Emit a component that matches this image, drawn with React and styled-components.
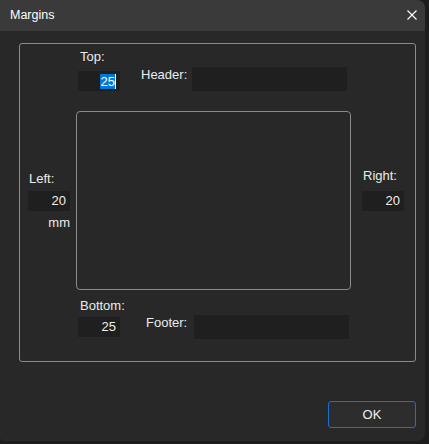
import React from "react";
import styled, { createGlobalStyle } from "styled-components";

const GlobalStyle = createGlobalStyle`
  html, body {
    margin: 0;
    padding: 0;
    background: #1d1d1d;
  }
  body {
    font-family: "Liberation Sans", Arial, sans-serif;
    font-size: 13px;
    color: #e8e8e8;
  }
`;

const Window = styled.div`
  width: 425px;
  height: 441px;
  background: #282828;
  border-radius: 0 8px 8px 4px;
  overflow: hidden;
  display: flex;
  flex-direction: column;
`;

const TitleBar = styled.div`
  height: 31px;
  flex: none;
  background: #3a3a3a;
  display: flex;
  align-items: center;
  justify-content: space-between;
  padding: 0 8px 0 10px;
  box-sizing: border-box;
`;

const Title = styled.span`
  font-size: 12.5px;
  color: #ffffff;
  line-height: 16px;
  margin-top: -1px;
`;

const CloseButton = styled.div`
  width: 10px;
  height: 10px;
  margin-top: -1px;
  display: flex;
`;

const Body = styled.div`
  flex: 1;
  display: flex;
  flex-direction: column;
  padding: 12px 9px 0 19px;
`;

const GroupBox = styled.div`
  width: 397px;
  height: 319px;
  box-sizing: border-box;
  border: 1px solid #8a8a8a;
  border-radius: 3px;
  display: grid;
  grid-template-columns: 8px 42px 6px 275px 11px 42px;
  grid-template-rows: 67px 179px 1fr;
`;

const Label = styled.div`
  line-height: 16px;
  white-space: nowrap;
  color: #ececec;
  width: ${(p) => (p.$width ? `${p.$width}px` : "auto")};
  margin-left: ${(p) => p.$indent || 0}px;
  text-align: ${(p) => p.$align || "left"};
`;

const Field = styled.div`
  width: ${(p) => p.$width}px;
  height: ${(p) => p.$height || 20}px;
  background: #1f1f1f;
  box-sizing: border-box;
  display: flex;
  align-items: center;
  justify-content: flex-end;
  padding-right: 4px;
  line-height: 16px;
  color: #f0f0f0;
  margin-left: ${(p) => p.$indent || 0}px;
`;

const Selected = styled.span`
  background: #0078d7;
  color: #ffffff;
  line-height: 15px;
  padding: 0 0 0 1px;
  border-right: 1px solid #ffffff;
`;

const SideColumn = styled.div`
  grid-column: ${(p) => p.$col};
  grid-row: 2;
  display: flex;
  flex-direction: column;
  padding-top: ${(p) => p.$top}px;
`;

const TopBlock = styled.div`
  grid-column: 4;
  grid-row: 1;
  display: flex;
  flex-direction: column;
  padding: 5px 0 0 2px;
`;

const BottomBlock = styled.div`
  grid-column: 4;
  grid-row: 3;
  display: flex;
  flex-direction: column;
  padding: 8px 0 0 2px;
`;

const FieldRow = styled.div`
  display: flex;
  align-items: ${(p) => p.$align || "center"};
  margin-top: ${(p) => p.$gap || 0}px;
`;

const RowLabel = styled(Label)`
  align-self: flex-start;
  margin-top: ${(p) => p.$drop || 0}px;
`;

const Page = styled.div`
  grid-column: 4;
  grid-row: 2;
  border: 1px solid #8a8a8a;
  border-radius: 4px;
`;

const Footer = styled.div`
  display: flex;
  justify-content: flex-end;
  margin-top: 39px;
`;

const Button = styled.button`
  width: 88px;
  height: 27px;
  box-sizing: border-box;
  background: #2d2d2d;
  border: 1px solid #1b6fd0;
  border-radius: 3px;
  color: #f2f2f2;
  font-family: inherit;
  font-size: 13px;
  padding: 0;
`;

const CloseIcon = () => (
  <svg width="10" height="10" viewBox="0 0 10 10">
    <path d="M0.5 0.5 L9.5 9.5 M9.5 0.5 L0.5 9.5" stroke="#ffffff" strokeWidth="1.1" />
  </svg>
);

export default function App() {
  return (
    <>
      <GlobalStyle />
      <Window>
        <TitleBar>
          <Title>Margins</Title>
          <CloseButton>
            <CloseIcon />
          </CloseButton>
        </TitleBar>
        <Body>
          <GroupBox>
            <TopBlock>
              <Label $indent={2}>Top:</Label>
              <FieldRow $align="flex-end" $gap={2}>
                <Field $width={42} $indent={0}>
                  <Selected>25</Selected>
                </Field>
                <RowLabel $indent={21} $width={51} $drop={0}>
                  Header:
                </RowLabel>
                <Field $width={155} $height={24} />
              </FieldRow>
            </TopBlock>

            <SideColumn $col={2} $top={60}>
              <Label $indent={1}>Left:</Label>
              <Field $width={42} style={{ marginTop: 4 }}>20</Field>
              <Label $align="right" style={{ marginTop: 4 }}>mm</Label>
            </SideColumn>

            <Page />

            <SideColumn $col={6} $top={57}>
              <Label $indent={1}>Right:</Label>
              <Field $width={42} style={{ marginTop: 7 }}>20</Field>
            </SideColumn>

            <BottomBlock>
              <Label $indent={2}>Bottom:</Label>
              <FieldRow $gap={1}>
                <Field $width={42}>25</Field>
                <RowLabel $indent={26} $width={48} $drop={0}>
                  Footer:
                </RowLabel>
                <Field $width={155} $height={24} />
              </FieldRow>
            </BottomBlock>
          </GroupBox>
          <Footer>
            <Button>OK</Button>
          </Footer>
        </Body>
      </Window>
    </>
  );
}
